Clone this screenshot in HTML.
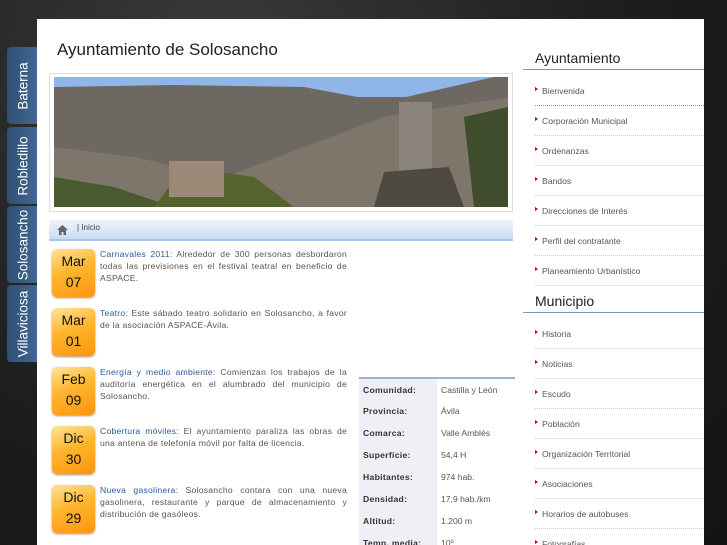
<!DOCTYPE html>
<html style="width:727px;height:545px;overflow:hidden"><head><meta charset="utf-8"><style>
*{margin:0;padding:0;box-sizing:border-box}
body{width:727px;height:545px;overflow:hidden;position:relative;font-family:"Liberation Sans",sans-serif;
background:radial-gradient(ellipse at 30% 10%,#3a3a3a,#1c1c1c 60%,#141414);}
.tab{position:absolute;left:7px;width:31px;height:77px;background:linear-gradient(90deg,#2f4f73,#436892);border-radius:4px 0 0 4px;color:#fff;}
.tab span{position:absolute;left:50%;top:50%;transform:translate(-50%,-50%) rotate(-90deg);font-size:13.5px;white-space:nowrap}
#panel{position:absolute;left:37px;top:19px;width:667px;height:526px;background:#fff}
h1{position:absolute;left:57px;top:40px;font-size:17px;font-weight:normal;color:#222}
.frame{position:absolute;left:49px;top:73px;width:464px;height:139px;border:1px solid #ddd;background:#fff}
.photo{position:absolute;left:54px;top:77px;width:454px;height:130px;overflow:hidden;background:#6d6861}
.crumb{position:absolute;left:49px;top:220px;width:464px;height:21px;background:linear-gradient(#eef4fc,#c9dcf5);border-bottom:2px solid #aac6ee;font-size:8px;color:#444}
.badge{position:absolute;left:52px;width:43px;height:48px;border-radius:5px;background:linear-gradient(160deg,#ffe39a,#ffb52e 45%,#ff9410);box-shadow:0 1px 2px #b86;text-align:center;color:#111;font-size:14px;line-height:21px;padding-top:2px}
.news{position:absolute;left:100px;width:247px;font-size:8.6px;letter-spacing:0.25px;line-height:12px;color:#555;text-align:justify}
.news a{color:#2a5c9a;text-decoration:none}
table{position:absolute;left:359px;top:377px;width:156px;border-collapse:collapse;border-top:2px solid #9cb2d0;font-size:8.6px;color:#555}
td{height:22px;padding-left:4px}
td.l{background:#eef0f5;font-weight:bold;color:#333;width:78px;letter-spacing:0.3px}
.sh{position:absolute;left:523px;width:181px;font-size:14px;color:#222;padding-left:12px;border-bottom:1px solid #7a95c0;height:20px}
.it{position:absolute;left:535px;width:169px;font-size:8.6px;color:#555;height:30px;border-bottom:1px dotted #ccc}
.it:before{content:"";position:absolute;left:0;top:11px;border-left:3px solid #c00;border-top:2px solid transparent;border-bottom:2px solid transparent}
.it span{position:absolute;left:7px;top:10px}
</style></head><body>
<div class="tab" style="top:47px"><span>Baterna</span></div>
<div class="tab" style="top:127px"><span>Robledillo</span></div>
<div class="tab" style="top:206px"><span>Solosancho</span></div>
<div class="tab" style="top:285px"><span>Villaviciosa</span></div>
<div id="panel"></div>
<h1>Ayuntamiento de Solosancho</h1>
<div class="frame"></div>
<div class="photo">
<svg width="454" height="130" style="position:absolute;left:0;top:0">
<rect width="454" height="20" fill="#8fb6e6"/>
<polygon points="0,10 120,8 250,10 330,25 440,0 454,0 454,130 0,130" fill="#6d6861"/>
<polygon points="0,70 80,80 170,100 250,70 330,40 454,20 454,130 0,130" fill="#7e766a"/>
<polygon points="0,100 60,110 120,130 0,130" fill="#4a5a2f"/>
<polygon points="130,90 200,100 240,130 100,130" fill="#55632f"/>
<rect x="115" y="84" width="55" height="36" fill="#9c8a78"/>
<rect x="345" y="25" width="33" height="70" fill="#8a847a"/>
<polygon points="330,95 395,90 410,130 320,130" fill="#4f4a40"/>
<polygon points="410,40 454,30 454,130 420,130" fill="#3f4d2d"/>
</svg></div>
<div class="crumb"><svg width="11" height="10" style="position:absolute;left:8px;top:5px"><polygon points="5.5,0 11,5 9,5 9,10 6.5,10 6.5,7 4.5,7 4.5,10 2,10 2,5 0,5" fill="#666"/></svg><span style="position:absolute;left:28px;top:3px">| Inicio</span></div>

<div class="badge" style="top:249px">Mar<br>07</div>
<div class="news" style="top:248px"><a>Carnavales 2011</a>: Alrededor de 300 personas desbordaron todas las previsiones en el festival teatral en beneficio de ASPACE.</div>
<div class="badge" style="top:308px">Mar<br>01</div>
<div class="news" style="top:307px"><a>Teatro</a>: Este sábado teatro solidario en Solosancho, a favor de la asociación ASPACE-Ávila.</div>
<div class="badge" style="top:367px">Feb<br>09</div>
<div class="news" style="top:366px"><a>Energía y medio ambiente</a>: Comienzan los trabajos de la auditoría energética en el alumbrado del municipio de Solosancho.</div>
<div class="badge" style="top:426px">Dic<br>30</div>
<div class="news" style="top:425px"><a>Cobertura móviles</a>: El ayuntamiento paraliza las obras de una antena de telefonía móvil por falta de licencia.</div>
<div class="badge" style="top:485px">Dic<br>29</div>
<div class="news" style="top:484px"><a>Nueva gasolinera</a>: Solosancho contara con una nueva gasolinera, restaurante y parque de almacenamiento y distribución de gasóleos.</div>

<table>
<tr><td class="l">Comunidad:</td><td>Castilla y León</td></tr>
<tr><td class="l">Provincia:</td><td>Ávila</td></tr>
<tr><td class="l">Comarca:</td><td>Valle Amblés</td></tr>
<tr><td class="l">Superficie:</td><td>54,4 H</td></tr>
<tr><td class="l">Habitantes:</td><td>974 hab.</td></tr>
<tr><td class="l">Densidad:</td><td>17,9 hab./km</td></tr>
<tr><td class="l">Altitud:</td><td>1.200 m</td></tr>
<tr><td class="l">Temp. media:</td><td>10º</td></tr>
</table>

<div class="sh" style="top:50px">Ayuntamiento</div>
<div class="it" style="top:76px;border-bottom-color:#999"><span>Bienvenida</span></div>
<div class="it" style="top:106px"><span>Corporación Municipal</span></div>
<div class="it" style="top:136px"><span>Ordenanzas</span></div>
<div class="it" style="top:166px"><span>Bandos</span></div>
<div class="it" style="top:196px"><span>Direcciones de Interés</span></div>
<div class="it" style="top:226px"><span>Perfil del contratante</span></div>
<div class="it" style="top:256px"><span>Planeamiento Urbanístico</span></div>
<div class="sh" style="top:293px">Municipio</div>
<div class="it" style="top:319px"><span>Historia</span></div>
<div class="it" style="top:349px"><span>Noticias</span></div>
<div class="it" style="top:379px"><span>Escudo</span></div>
<div class="it" style="top:409px"><span>Población</span></div>
<div class="it" style="top:439px"><span>Organización Territorial</span></div>
<div class="it" style="top:469px"><span>Asociaciones</span></div>
<div class="it" style="top:499px"><span>Horarios de autobuses</span></div>
<div class="it" style="top:529px"><span>Fotografías</span></div>
</body></html>
